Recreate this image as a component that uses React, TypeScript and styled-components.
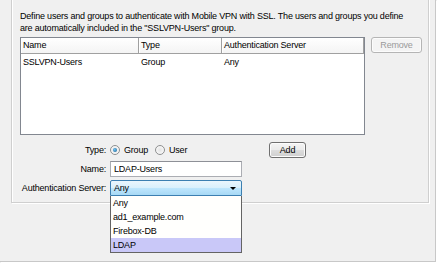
import React from "react";
import styled, { createGlobalStyle } from "styled-components";

const GlobalStyle = createGlobalStyle`
  html, body {
    margin: 0;
    padding: 0;
    background: #f0f0f0;
  }
  body {
    font-family: "Liberation Sans", Arial, sans-serif;
    font-size: 9px;
    letter-spacing: -0.2px;
    color: #000;
  }
`;

const StyledPage = styled.div`
  width: 437px;
  height: 263px;
  overflow: hidden;
  background: #f0f0f0;
`;
const StyledFrame = styled.div`
  display: flow-root;
  width: 436px;
  height: 262px;
  box-sizing: border-box;
  border-right: 1px solid #c8c8c8;
  border-bottom: 1px solid #c8c8c8;
  box-shadow: 1px 1px 0 #ffffff;
`;
const StyledGroupBox = styled.div`
  position: relative;
  margin: -10px 0 0 11px;
  width: 418px;
  height: 213px;
  box-sizing: border-box;
  border: 1px solid #cfcfcf;
  box-shadow: inset 1px 1px 0 #ffffff, 1px 1px 0 #ffffff;
  padding: 19px 0 0 8px;
`;
const StyledDescription = styled.p`
  margin: 0;
  line-height: 12px;
  white-space: nowrap;
`;
const StyledListRow = styled.div`
  display: flex;
  gap: 6px;
  margin-top: 3px;
`;
const StyledTable = styled.div`
  width: 345px;
  height: 98px;
  box-sizing: border-box;
  border: 1px solid #828790;
  background: #ffffff;
`;
const StyledHeader = styled.div`
  display: flex;
  height: 16px;
`;
const StyledHeaderCell = styled.div<{ $width: number }>`
  width: ${p => p.$width}px;
  flex-shrink: 0;
  box-sizing: border-box;
  padding-left: 2px;
  line-height: 15px;
  background: linear-gradient(#ffffff, #f4f4f4);
  border-right: 1px solid #a0a0a0;
  border-bottom: 1px solid #a0a0a0;
  box-shadow: inset 1px 1px 0 #ffffff;
  &:last-child {
    flex-grow: 1;
  }
`;
const StyledDataRow = styled.div`
  display: flex;
  height: 16px;
  line-height: 16px;
`;
const StyledDataCell = styled.div<{ $width: number }>`
  width: ${p => p.$width}px;
  flex-shrink: 0;
  padding-left: 2px;
  box-sizing: border-box;
`;
const StyledButton = styled.button<{ $width: number }>`
  width: ${p => p.$width}px;
  height: 16px;
  padding: 0;
  font-family: inherit;
  font-size: 9px;
  letter-spacing: inherit;
  color: ${p => (p.disabled ? "#9a9a9a" : "#000")};
  border: 1px solid ${p => (p.disabled ? "#b5b5b5" : "#707070")};
  border-radius: 3px;
  background: ${p =>
    p.disabled
      ? "#f4f4f4"
      : "linear-gradient(#f4f4f4 0%, #ebebeb 50%, #dddddd 51%, #cfcfcf 100%)"};
  box-shadow: inset 0 0 0 1px #fcfcfc;
`;
const StyledAddButton = styled(StyledButton)`
  margin-left: 23px;
`;
const StyledForm = styled.div`
  display: grid;
  grid-template-columns: 86px 132px auto;
  column-gap: 4px;
  row-gap: 3px;
  margin-top: 7px;
  align-items: center;
`;
const StyledLabel = styled.span`
  text-align: right;
  white-space: nowrap;
`;
const StyledRadioGroup = styled.div`
  display: flex;
  align-items: center;
  gap: 4px;
  height: 16px;
`;
const StyledRadio = styled.span<{ $checked?: boolean }>`
  width: 10px;
  height: 10px;
  border-radius: 50%;
  box-sizing: border-box;
  border: 1px solid #8e8f8f;
  background: radial-gradient(circle, #e4e4e4, #ffffff);
  display: inline-flex;
  align-items: center;
  justify-content: center;
  &::after {
    content: "";
    width: 4px;
    height: 4px;
    border-radius: 50%;
    background: ${p => (p.$checked ? "radial-gradient(circle at 40% 40%, #6cc4f5, #1a5d8d)" : "transparent")};
  }
`;
const StyledRadioText = styled.span`
  margin-right: 3px;
`;
const StyledInput = styled.div`
  height: 16px;
  box-sizing: border-box;
  border: 1px solid #abadb3;
  border-top-color: #8e9097;
  background: #ffffff;
  padding-left: 3px;
  line-height: 14px;
`;
const StyledSelectWrap = styled.div`
  position: relative;
  height: 16px;
`;
const StyledSelect = styled.div`
  height: 16px;
  box-sizing: border-box;
  border: 1px solid #3c7fb1;
  border-radius: 2px 2px 0 0;
  background: linear-gradient(#eaf6fd 0%, #d9f0fc 50%, #bee6fd 51%, #a7d9f5 100%);
  padding: 0 5px 0 3px;
  line-height: 14px;
  display: flex;
  align-items: center;
  justify-content: space-between;
`;
const StyledArrow = styled.span`
  width: 0;
  height: 0;
  border-left: 3px solid transparent;
  border-right: 3px solid transparent;
  border-top: 3px solid #000;
`;
const StyledDropList = styled.div`
  position: absolute;
  left: 0;
  top: 16px;
  width: 132px;
  box-sizing: border-box;
  border: 1px solid #646464;
  border-top: none;
  background: #fffffd;
  z-index: 2;
`;
const StyledOption = styled.div<{ $active?: boolean }>`
  height: 14px;
  line-height: 14px;
  padding-left: 2px;
  background: ${p => (p.$active ? "#c9c8f8" : "transparent")};
`;

const cols = [
  { key: "name", title: "Name", width: 118 },
  { key: "type", title: "Type", width: 83 },
  { key: "server", title: "Authentication Server", width: 142 },
];

const rows = [{ name: "SSLVPN-Users", type: "Group", server: "Any" }];

const servers = ["Any", "ad1_example.com", "Firebox-DB", "LDAP"];

export default function App() {
  return (
    <>
      <GlobalStyle />
      <StyledPage>
        <StyledFrame>
          <StyledGroupBox>
            <StyledDescription>
              Define users and groups to authenticate with Mobile VPN with SSL. The users and groups you define
              <br />
              are automatically included in the "SSLVPN-Users" group.
            </StyledDescription>
            <StyledListRow>
              <StyledTable>
                <StyledHeader>
                  {cols.map(c => (
                    <StyledHeaderCell key={c.key} $width={c.width}>{c.title}</StyledHeaderCell>
                  ))}
                </StyledHeader>
                {rows.map(r => (
                  <StyledDataRow key={r.name}>
                    {cols.map(c => (
                      <StyledDataCell key={c.key} $width={c.width}>
                        {r[c.key as keyof typeof r]}
                      </StyledDataCell>
                    ))}
                  </StyledDataRow>
                ))}
              </StyledTable>
              <StyledButton $width={51} disabled>Remove</StyledButton>
            </StyledListRow>
            <StyledForm>
              <StyledLabel>Type:</StyledLabel>
              <StyledRadioGroup>
                <StyledRadio $checked />
                <StyledRadioText>Group</StyledRadioText>
                <StyledRadio />
                <StyledRadioText>User</StyledRadioText>
              </StyledRadioGroup>
              <StyledAddButton $width={37}>Add</StyledAddButton>

              <StyledLabel>Name:</StyledLabel>
              <StyledInput>LDAP-Users</StyledInput>
              <span />

              <StyledLabel>Authentication Server:</StyledLabel>
              <StyledSelectWrap>
                <StyledSelect>
                  Any
                  <StyledArrow />
                </StyledSelect>
                <StyledDropList>
                  {servers.map(s => (
                    <StyledOption key={s} $active={s === "LDAP"}>{s}</StyledOption>
                  ))}
                </StyledDropList>
              </StyledSelectWrap>
              <span />
            </StyledForm>
          </StyledGroupBox>
        </StyledFrame>
      </StyledPage>
    </>
  );
}
